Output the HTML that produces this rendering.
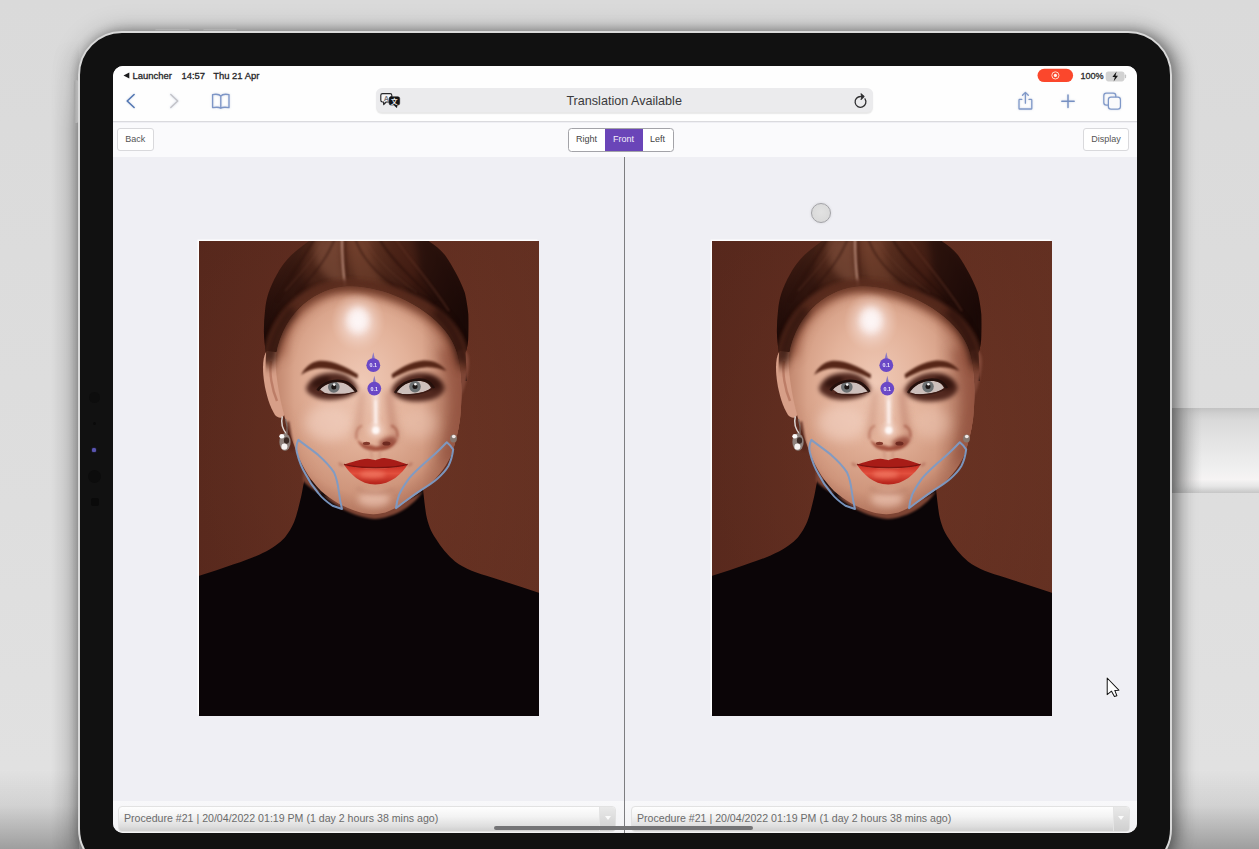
<!DOCTYPE html>
<html lang="en">
<head>
<meta charset="utf-8">
<title>Procedure comparison</title>
<style>
*{box-sizing:border-box;margin:0;padding:0}
html,body{width:1259px;height:849px;overflow:hidden}
body{position:relative;background:#dddddd;font-family:"Liberation Sans",sans-serif;color:#222}
.abs{position:absolute}
/* desk / backdrop */
#desk{left:0;top:0;width:1259px;height:849px;background:linear-gradient(180deg,#dadada 0,#dedede 60%,#e2e2e2 100%)}
#pencil{left:1172px;top:408px;width:87px;height:85px;background:linear-gradient(180deg,#c2c2c2 0,#cfcfcf 6%,#d9d9d9 14%,#e4e4e4 40%,#efefef 70%,#f6f4f4 84%,#e6e6e6 92%,#c6c6c6 100%)}
#pencilfade{left:1172px;top:408px;width:30px;height:85px;background:linear-gradient(90deg,rgba(178,178,178,.9),rgba(200,200,200,0))}
#rshadow{left:1172px;top:60px;width:40px;height:789px;background:linear-gradient(90deg,rgba(120,120,120,.38),rgba(150,150,150,.16) 45%,rgba(160,160,160,0))}
#lband{left:52px;top:40px;width:27px;height:809px;background:linear-gradient(90deg,rgba(0,0,0,0),rgba(0,0,0,.05) 45%,rgba(0,0,0,.15));-webkit-mask-image:linear-gradient(180deg,transparent 0,#000 90px);mask-image:linear-gradient(180deg,transparent 0,#000 90px)}
#botshade{left:0;top:770px;width:1259px;height:79px;background:linear-gradient(180deg,rgba(0,0,0,0),rgba(0,0,0,.07) 45%,rgba(0,0,0,.30))}
/* device */
#device{left:77.5px;top:30.5px;width:1094px;height:842px;border-radius:44px;background:#111111;border:2.6px solid #d9d9d9;box-shadow:7px 1px 15px 1px rgba(0,0,0,.30),0 0 24px 5px rgba(0,0,0,.13),0 0 8px 1px rgba(0,0,0,.16)}
.hwbtn{background:linear-gradient(180deg,#f2f2f2,#cfcfcf);border-radius:1.5px}
#screen{left:113px;top:66px;width:1023.5px;height:767px;border-radius:10px;background:#efeff4;overflow:hidden}
/* safari */
#safari{left:0;top:0;width:100%;height:56px;background:#fefefe;border-bottom:1px solid #dadade}
.st{font-size:9.45px;font-weight:normal;color:#262628;-webkit-text-stroke:.3px #262628;white-space:nowrap;line-height:12px}
#url{left:262.5px;top:22.3px;width:497.3px;height:24px;border-radius:6px;background:#ebebed;box-shadow:0 1.6px 1.2px rgba(0,0,0,.09)}
#urltxt{left:0;top:0;width:100%;height:24px;line-height:27px;text-align:center;font-size:12.6px;color:#3a3a3c}
/* app bar */
#appbar{left:0;top:57px;width:100%;height:34px;background:#fafafc}
.btn{background:#fff;border:1px solid #d9d9dc;border-radius:3px;font-size:9px;color:#555;text-align:center;line-height:21px;height:23px}
#seg{left:454.5px;top:62px;width:106px;height:23.5px;border:1px solid #a3a3a8;border-radius:3.5px;background:#fff;overflow:hidden;font-size:9px;color:#444;line-height:21px}
#seg span{position:absolute;top:0;height:22px;text-align:center}
/* content */
#vline{left:510.5px;top:91px;width:1.4px;height:676px;background:#7d7d80}
#touch{left:698px;top:137px;width:20px;height:20px;border-radius:50%;background:radial-gradient(circle at 50% 45%,#e2e2e2,#d6d6d6);border:1px solid #a2a2a6;box-shadow:0 0 3px rgba(0,0,0,.12)}
.photo{width:340px;height:475px;box-shadow:-1.5px -1.5px 0 0 rgba(255,255,255,.9)}
/* bottom */
#bottom{left:0;top:735px;width:100%;height:32px;background:linear-gradient(180deg,#f8f8fa,#f2f2f4)}
.sel{top:740px;height:26px;border-radius:4px;border:1px solid #e2e2e2;background:linear-gradient(180deg,#fefefe 0,#f3f3f3 40%,#dedede 80%,#cfcfcf 100%);font-size:10.6px;color:#6b6b6b;line-height:23px;padding-left:5px;white-space:nowrap;overflow:hidden}
.sel i{position:absolute;right:0;top:0;width:16px;height:100%;background:linear-gradient(180deg,#e9e9e9,#cfcfcf);border-left:1px solid #e4e4e4}
.sel i:after{content:"";position:absolute;left:4.5px;top:9px;border:3.2px solid transparent;border-top:4px solid #fbfbfb}
#home{left:381px;top:760px;width:259px;height:4.2px;border-radius:2.2px;background:#747476}
</style>
</head>
<body>
<div id="desk" class="abs"></div>
<div id="lband" class="abs"></div>
<div id="botshade" class="abs"></div>
<div id="pencil" class="abs"></div>
<div id="pencilfade" class="abs"></div>

<!-- hardware buttons -->
<div class="abs hwbtn" style="left:155px;top:28.6px;width:35px;height:3.6px"></div>
<div class="abs hwbtn" style="left:203px;top:28.6px;width:34px;height:3.6px"></div>
<div class="abs hwbtn" style="left:74.3px;top:80px;width:4px;height:43px;background:linear-gradient(90deg,#bdbdbd,#f0f0f0)"></div>

<div id="device" class="abs"></div>

<!-- bezel sensors -->
<div class="abs" style="left:88.5px;top:391.5px;width:11px;height:11px;border-radius:50%;background:#0d0d0d"></div>
<div class="abs" style="left:92.5px;top:422px;width:3px;height:3px;border-radius:50%;background:#0a0a0a"></div>
<div class="abs" style="left:91.7px;top:448.2px;width:4px;height:3.6px;border-radius:1.5px;background:#5a55b0;box-shadow:0 0 1.5px #4a47a0"></div>
<div class="abs" style="left:87.5px;top:469.5px;width:13px;height:13px;border-radius:50%;background:#0c0c0c"></div>
<div class="abs" style="left:90.5px;top:498px;width:8px;height:8px;border-radius:2px;background:#0a0a0a"></div>

<div id="screen" class="abs">
  <div id="safari" class="abs">
    <!-- status bar -->
    <svg class="abs" style="left:10.4px;top:6.2px" width="7" height="7" viewBox="0 0 7 7"><path d="M6.3 0.4 L6.3 6.4 L0.5 3.4 Z" fill="#1c1c1e"/></svg>
    <div class="abs st" style="left:19.6px;top:3.6px">Launcher</div>
    <div class="abs st" style="left:68.4px;top:3.6px">14:57</div>
    <div class="abs st" style="left:100.2px;top:3.6px">Thu 21 Apr</div>
    <svg class="abs" style="left:0;top:0;filter:drop-shadow(0 .8px 1.2px rgba(90,115,170,.28))" width="1023.5" height="56" viewBox="0 0 1023.5 56" fill="none" stroke-linecap="round" stroke-linejoin="round">
      <path d="M21.1 28.5 L14.2 35 L21.1 41.5" stroke="#5377b3" stroke-width="1.6"/>
      <path d="M57.8 28.5 L64.7 35 L57.8 41.5" stroke="#c3c3c8" stroke-width="1.5"/>
      <path d="M107.8 30.2 C106.6 28.4 103.6 27.9 99.6 28.6 L99.6 41.6 C103.6 41 106.6 41.3 107.8 42.2 C109 41.3 112 41 116 41.6 L116 28.6 C112 27.9 109 28.4 107.8 30.2 Z M107.8 30.2 L107.8 42" stroke="#7d95c6" stroke-width="1.35"/>
      <path d="M906 34.2 L906 42.4 Q906 43 906.7 43 L918.1 43 Q918.8 43 918.8 42.4 L918.8 34.2 Q918.8 33.4 918.1 33.4 L916 33.4 M906 34.2 Q906 33.4 906.7 33.4 L908.8 33.4 M912.4 26.6 L912.4 37.2 M909.5 29.3 L912.4 26.4 L915.3 29.3" stroke="#7f98c8" stroke-width="1.3"/>
      <path d="M948.8 35.2 L961.2 35.2 M955 29 L955 41.4" stroke="#7690c2" stroke-width="1.45"/>
      <rect x="990.8" y="27.2" width="12" height="12" rx="2.6" stroke="#7f98c8" stroke-width="1.25"/>
      <rect x="995.4" y="31.2" width="12" height="11.8" rx="2.6" fill="#fafafb" stroke="#7f98c8" stroke-width="1.25"/>
    </svg>
    <!-- record pill / battery -->
    <svg class="abs" style="left:920px;top:0" width="100" height="20" viewBox="920 0 100 20">
      <rect x="924.5" y="2.7" width="35.6" height="13.4" rx="6.7" fill="#fb472c"/>
      <circle cx="942.4" cy="9.4" r="3.6" fill="none" stroke="#ffd8c8" stroke-width="1"/>
      <circle cx="942.4" cy="9.4" r="1.6" fill="#fff3ee"/>
      <rect x="992.7" y="5.6" width="18.8" height="9.8" rx="2.8" fill="#d2d2d2"/>
      <rect x="1011.8" y="8.6" width="1.3" height="3.6" rx=".6" fill="#c4c4c4"/>
      <path d="M1003.6 5.4 L999.4 11 L1001.9 11 L1000.6 15.6 L1005 9.8 L1002.5 9.8 Z" fill="#141414"/>
    </svg>
    <div class="abs st" style="left:967.4px;top:3.6px;color:#333;font-size:9.1px">100%</div>
    <!-- URL -->
    <div id="url" class="abs">
      <svg class="abs" style="left:0;top:0" width="497.5" height="26" viewBox="262.5 22.3 497.5 26" fill="none" stroke-linecap="round" stroke-linejoin="round">
        <path d="M269 27.9 L276.6 27.9 Q278.3 27.9 278.3 29.6 L278.3 34.6 Q278.3 36.3 276.6 36.3 L272.6 36.3 L270.2 38.9 L270.2 36.3 L269 36.3 Q267.3 36.3 267.3 34.6 L267.3 29.6 Q267.3 27.9 269 27.9 Z" fill="#f6f6f7" stroke="#262628" stroke-width="1.15"/>
        <text x="272.8" y="35.1" font-family="Liberation Sans, sans-serif" font-size="7.2" font-weight="bold" fill="#77777c" stroke="none" text-anchor="middle">A</text>
        <path d="M277.4 31 L284.4 31 Q286.2 31 286.2 32.8 L286.2 37.6 Q286.2 39.4 284.4 39.4 L283.8 39.4 L283.2 42 L280.4 39.4 L277.4 39.4 Q275.6 39.4 275.6 37.6 L275.6 32.8 Q275.6 31 277.4 31 Z" fill="#141416" stroke="#141416" stroke-width=".5"/>
        <text x="280.9" y="37.9" font-family="Noto Sans CJK SC, Liberation Sans, sans-serif" font-size="6.6" font-weight="bold" fill="#f2f2f2" stroke="none" text-anchor="middle">文</text>
        <path d="M751.5 33.2 A5.4 5.4 0 1 1 747.3 30.8 L749.6 30.8" stroke="#2e2e30" stroke-width="1.3"/>
        <path d="M747.6 28.2 L750.4 30.8 L747.6 33.5" stroke="#2e2e30" stroke-width="1.3" fill="#2e2e30"/>
      </svg>
      <div id="urltxt" class="abs">Translation Available</div>
    </div>
  </div>

  <div id="appbar" class="abs"></div>
  <div class="abs btn" style="left:4px;top:62.4px;width:36.6px">Back</div>
  <div id="seg" class="abs">
    <span style="left:0;width:36px">Right</span>
    <span style="left:36px;width:38px;background:#6a45b8;color:#f3effb;height:23px">Front</span>
    <span style="left:74px;width:30px">Left</span>
  </div>
  <div class="abs btn" style="left:970px;top:62.2px;width:46px">Display</div>

    <div id="touch" class="abs"></div>

  <!-- PHOTOS -->
  <svg class="abs photo" style="left:85.5px;top:175px" width="340" height="475" viewBox="0 0 340 475">
    <defs>
      <linearGradient id="bgG" x1="0" y1="0" x2="1" y2="0">
        <stop offset="0" stop-color="#59291d"/><stop offset=".45" stop-color="#602d20"/><stop offset="1" stop-color="#6a3424"/>
      </linearGradient>
      <radialGradient id="bgV" cx=".5" cy=".45" r=".75">
        <stop offset="0" stop-color="#7a3d29" stop-opacity=".35"/><stop offset="1" stop-color="#4a2118" stop-opacity=".25"/>
      </radialGradient>
      <radialGradient id="hairG" gradientUnits="userSpaceOnUse" cx="152" cy="-6" r="135" gradientTransform="translate(152 -6) scale(1 1.05) translate(-152 6)">
        <stop offset="0" stop-color="#683827"/><stop offset=".28" stop-color="#522a1c"/><stop offset=".52" stop-color="#3c1b12"/><stop offset=".78" stop-color="#29100b"/><stop offset="1" stop-color="#1b0906"/>
      </radialGradient>
      <radialGradient id="skinG" cx=".47" cy=".42" r=".62">
        <stop offset="0" stop-color="#efc9b6"/><stop offset=".42" stop-color="#e3b29a"/><stop offset=".78" stop-color="#cf967c"/><stop offset="1" stop-color="#a96b54"/>
      </radialGradient>
      <linearGradient id="sideShade" x1="0" y1="0" x2="1" y2="0">
        <stop offset="0" stop-color="#a0604a" stop-opacity=".55"/><stop offset=".16" stop-color="#a0604a" stop-opacity="0"/><stop offset=".74" stop-color="#8c4f3c" stop-opacity="0"/><stop offset="1" stop-color="#7a4030" stop-opacity=".85"/>
      </linearGradient>
      <radialGradient id="foreHL" cx=".5" cy=".5" r=".5">
        <stop offset="0" stop-color="#fbf1f1" stop-opacity=".98"/><stop offset=".4" stop-color="#f7e2dc" stop-opacity=".75"/><stop offset="1" stop-color="#f0cdbd" stop-opacity="0"/>
      </radialGradient>
      <linearGradient id="lipLow" x1="0" y1="0" x2="0" y2="1">
        <stop offset="0" stop-color="#c62a20"/><stop offset=".45" stop-color="#e24f3d"/><stop offset="1" stop-color="#b32119"/>
      </linearGradient>
      <filter id="b1" color-interpolation-filters="sRGB" filterUnits="userSpaceOnUse" x="-40" y="-40" width="420" height="555"><feGaussianBlur stdDeviation="1"/></filter>
      <filter id="b2" color-interpolation-filters="sRGB" filterUnits="userSpaceOnUse" x="-40" y="-40" width="420" height="555"><feGaussianBlur stdDeviation="2"/></filter>
      <filter id="b3" color-interpolation-filters="sRGB" filterUnits="userSpaceOnUse" x="-40" y="-40" width="420" height="555"><feGaussianBlur stdDeviation="3.5"/></filter>
      <filter id="b6" color-interpolation-filters="sRGB" filterUnits="userSpaceOnUse" x="-40" y="-40" width="420" height="555"><feGaussianBlur stdDeviation="6"/></filter>
      <filter id="b08" color-interpolation-filters="sRGB" filterUnits="userSpaceOnUse" x="-40" y="-40" width="420" height="555"><feGaussianBlur stdDeviation=".85"/></filter>
      <filter id="b05" color-interpolation-filters="sRGB" filterUnits="userSpaceOnUse" x="-40" y="-40" width="420" height="555"><feGaussianBlur stdDeviation=".55"/></filter>
      <clipPath id="pclip"><rect x="0" y="0" width="340" height="475"/></clipPath>
      <clipPath id="faceClip"><path id="facePath" d="M77 114 C81 91 92 74 105 63 C118 52 133 46.500 148 45.500 C165 44.500 186 50 201 57 C219 65 236 77 246 90 C254 100 258 110 260 122 C263 140 263 160 261 178 C259 192 256 204 252 214 C246 228 236 240 222 250 C210 259 200 266 190 270 C181 274 170 274 160 271 C146 267 132 259 122 250 C110 238 101 222 95 204 C88 186 82 165 79 145 C77 132 76 122 77 112 Z"/></clipPath>
      <clipPath id="hairClip"><path d="M114 -3 C106 3 98 9 92.500 14 C86 20 81.500 27 78.200 33 C74.500 39.500 71.500 46 69.500 52 C67.500 58 66.500 64 66 70 C65.200 77 64.800 84 64.900 91 C65 98 66 105 67 112 L66 140 L268 140 L266.500 112 C268.500 106 269.300 100 269.300 94.400 C269.500 87 269.500 80 269.300 73.200 C268.500 66 267.500 59 265.900 52 C263.500 45 260.500 39 257.400 33 C254 26.500 250 20 245.900 14 C241 8.500 236 4 230.500 0.700 L227 -3 Z"/></clipPath>
    </defs>

    <g id="portrait" clip-path="url(#pclip)">
      <rect width="340" height="475" fill="url(#bgG)"/>
      <rect width="340" height="475" fill="url(#bgV)"/>

      <!-- hair -->
      <g filter="url(#b05)">
        <path d="M114 -3 C106 3 98 9 92.500 14 C86 20 81.500 27 78.200 33 C74.500 39.500 71.500 46 69.500 52 C67.500 58 66.500 64 66 70 C65.200 77 64.800 84 64.900 91 C65 98 66 105 67 112 L66 140 L268 140 L266.500 112 C268.500 106 269.300 100 269.300 94.400 C269.500 87 269.500 80 269.300 73.200 C268.500 66 267.500 59 265.900 52 C263.500 45 260.500 39 257.400 33 C254 26.500 250 20 245.900 14 C241 8.500 236 4 230.500 0.700 L227 -3 Z" fill="url(#hairG)"/>
      </g>
      <g clip-path="url(#hairClip)">
        <g filter="url(#b3)">
          <path d="M105 -3 C90 16 76 40 70 70 C66 90 66 104 68 118 L82 118 C82 92 92 66 112 48 C100 36 100 14 112 -3 Z" fill="#1e0b08" opacity=".28"/>
          <path d="M232 -3 C250 16 264 44 268 74 C270 92 269 106 267 120 L248 96 C240 78 226 64 204 54 C222 40 224 14 214 -3 Z" fill="#190806" opacity=".45"/>
          <path d="M118 -3 C112 14 118 34 140 44 L150 44 C142 30 140 12 142 -3 Z" fill="#93604a" opacity=".42"/>
          <path d="M150 -3 C150 14 152 30 158 44 L190 48 C176 34 170 14 172 -3 Z" fill="#8a523b" opacity=".38"/>
          <path d="M186 -3 C190 14 200 34 216 50 L232 58 C224 38 214 16 208 -3 Z" fill="#4a2015" opacity=".45"/>
        </g>
        <!-- strands -->
        <g fill="none" filter="url(#b1)" opacity=".55">
          <path d="M136 -3 C130 14 118 30 98 52" stroke="#2a100b" stroke-width="1.600"/>
          <path d="M126 -3 C118 14 104 30 86 50" stroke="#7a4a38" stroke-width="1.400" opacity=".5"/>
          <path d="M116 -3 C106 14 92 34 78 60" stroke="#2a100b" stroke-width="1.800"/>
          <path d="M156 -3 C162 16 176 32 200 48" stroke="#2a100b" stroke-width="1.600"/>
          <path d="M166 -3 C174 16 192 32 218 52" stroke="#7a4a38" stroke-width="1.400" opacity=".5"/>
          <path d="M180 -3 C190 16 210 34 236 60" stroke="#220c08" stroke-width="2"/>
          <path d="M196 -3 C208 16 228 36 250 70" stroke="#6a3a2a" stroke-width="1.400"/>
        </g>
        <!-- parting -->
        <path d="M143 -3 C143 14 144 30 146 44" stroke="#c29584" stroke-width="1.800" fill="none" filter="url(#b1)" opacity=".95"/>
        <path d="M146.5 -3 C146.5 14 147.5 30 149.5 44" stroke="#3a160e" stroke-width="1.6" fill="none" filter="url(#b1)" opacity=".55"/>
      </g>

      <!-- body -->
      <path d="M-2 335.5 C12 331 24 327 34 323.5 C48 319 58 315 67 310.5 C77 305 83 300 87 295 C93 287 96 280 98 272 C101 262 103 252 104 246 L106 236 C130 250 200 256 222 244 L224 248 C225 258 226 266 227 273 C229 283 232 291 237 298 C242 306 248 314 256 320.5 C266 328 278 332 293 336.5 C310 342 326 347 342 352.5 L342 477 L-2 477 Z" fill="#0b0507" filter="url(#b05)"/>
      

      <!-- left ear -->
      <g filter="url(#b05)">
        <path d="M68 110 C64 114 63 126 65 140 C67 154 71 166 76 174 C80 178 84 178 86 172 L84 112 Z" fill="#d79f88"/>
        <path d="M72 120 C70 132 73 148 78 160" stroke="#b06f5a" stroke-width="2.4" fill="none" opacity=".7"/>
      </g>
      <!-- right ear (shadow side) -->
      <path d="M259 110 C266 106 271 112 270 124 C269 136 265 150 260 160 Z" fill="#7f4636" filter="url(#b1)"/>

      <!-- neck shadow under jaw -->
      <path d="M104 228 C120 258 150 276 176 278 C200 276 218 262 228 244 L224 250 C200 270 130 268 104 240 Z" fill="#7d4433" filter="url(#b1)"/>

      <!-- face -->
      <g filter="url(#b05)"><use href="#facePath" fill="url(#skinG)"/></g>
      <g clip-path="url(#faceClip)">
        <rect x="60" y="30" width="220" height="260" fill="url(#sideShade)"/>
        <!-- hairline soft shadow -->
        <path d="M77 116 C80 90 92 72 106 61 C120 50 134 45 148 44 C166 43 186 49 202 56 C222 65 240 78 250 92 C257 102 259 112 260 124" stroke="#94553f" stroke-width="15" fill="none" filter="url(#b6)" opacity=".9"/>
        <!-- cheek/jaw shading -->
        <path d="M84 170 C90 205 104 236 128 256 C146 270 168 276 188 272 C208 264 232 246 248 222 C256 208 260 190 262 176 L272 176 L272 290 L70 290 Z" fill="#b77760" filter="url(#b6)" opacity=".55"/>
        <path d="M238 110 C252 140 254 180 240 220 L275 225 L275 100 Z" fill="#93523f" filter="url(#b6)" opacity=".7"/>
        <!-- forehead highlight -->
        <ellipse cx="159" cy="81" rx="27" ry="30" fill="url(#foreHL)"/>
        <ellipse cx="159" cy="79" rx="10" ry="12" fill="#fdf6f6" filter="url(#b3)" opacity=".9"/>
        <!-- cheek highlights -->
        <ellipse cx="130" cy="182" rx="24" ry="18" fill="#f4d6c8" filter="url(#b6)" opacity=".55"/>
        <ellipse cx="220" cy="182" rx="18" ry="16" fill="#efcbb9" filter="url(#b6)" opacity=".45"/>
        <ellipse cx="175" cy="258" rx="16" ry="8" fill="#ecc4b2" filter="url(#b3)" opacity=".7"/>

        <!-- eye shadow / smoky -->
        <g filter="url(#b2)">
          <path d="M107 147 C110 136 124 130 140 132 C150 134 156 140 159 149 C152 158 132 161 118 157 C111 154 107 151 107 147 Z" fill="#4b2219" opacity=".95"/>
          <path d="M192 150 C195 140 206 133 220 131.500 C234 131 244 137 246 147 C244 156 232 161 216 160.500 C203 160 195 156 192 150 Z" fill="#4b2219" opacity=".95"/>
          <ellipse cx="122" cy="141" rx="10" ry="5" fill="#2e120d" opacity=".8" transform="rotate(-18 122 141)"/>
          <ellipse cx="232" cy="142" rx="10" ry="6" fill="#2e120d" opacity=".8" transform="rotate(22 232 142)"/>
        </g>
        <!-- eyes -->
        <g filter="url(#b05)">
          <path d="M121 148.500 C126 142.500 137 139.500 146 142.500 C150 144.500 153.500 147.500 156 151 C148 153 133 153.500 126 152 Z" fill="#cdbfbb"/>
          <circle cx="134.800" cy="146" r="5.800" fill="#6c7072"/>
          <circle cx="134.800" cy="146" r="2.500" fill="#1b1514"/>
          <circle cx="135.200" cy="143.600" r="1.300" fill="#f6f4f4"/>
          <path d="M118.500 149.500 C124 141 138 137.500 147.500 141.500 C151.500 143.500 155 147 157.500 151" stroke="#24100c" stroke-width="2.600" fill="none"/>
          <path d="M123 152 C132 155 146 154.500 156 151" stroke="#3a1a14" stroke-width="1.300" fill="none"/>

          <path d="M197.500 151 C201 145 209 140.500 219 140 C226 140 230 142.500 232 147 C227 151.500 212 154 203 153 Z" fill="#cdbfbb"/>
          <circle cx="216" cy="145.600" r="5.800" fill="#6c7072"/>
          <circle cx="216" cy="145.600" r="2.500" fill="#1b1514"/>
          <circle cx="216.400" cy="143.200" r="1.300" fill="#f6f4f4"/>
          <path d="M196 152 C200.500 144 209.500 139 220 138.500 C227 138.500 232 141.500 235 147" stroke="#24100c" stroke-width="2.600" fill="none"/>
          <path d="M198.500 152.500 C207 155 223 154 232.500 148" stroke="#3a1a14" stroke-width="1.300" fill="none"/>
        </g>
        <!-- brows -->
        <g filter="url(#b08)">
          <path d="M102 134 C105.500 127 111 121.500 119 120 C131 118.500 146 125 159 133.500 L158.500 137.500 C147 131.500 133 127 121 127.200 C113 127.600 107 130.500 102 134 Z" fill="#562617"/>
          <path d="M192.500 133.500 C201 127 212 121 224 119.600 C234 118.800 242 122.500 247.500 130 C241 127.500 234 126 226 126.400 C214 127.400 203 132 193.500 137.500 Z" fill="#562617"/>
        </g>

        <!-- nose -->
        <path d="M163 150 C162 170 160 184 157 196" stroke="#c38872" stroke-width="5" fill="none" filter="url(#b3)" opacity=".6"/>
        <path d="M190 150 C191 170 193 184 197 196" stroke="#b97a66" stroke-width="6" fill="none" filter="url(#b3)" opacity=".7"/>
        <path d="M176.600 150 L176.800 184" stroke="#f9e9e3" stroke-width="4.600" stroke-linecap="round" fill="none" filter="url(#b2)" opacity=".95"/>
        <path d="M176.700 160 L176.800 182" stroke="#fff6f3" stroke-width="2" stroke-linecap="round" fill="none" filter="url(#b1)" opacity=".9"/>
        <ellipse cx="176.800" cy="189.200" rx="3.600" ry="3.800" fill="#ffffff" filter="url(#b1)"/>
        <ellipse cx="176.800" cy="189.200" rx="6" ry="6" fill="#fff2ee" filter="url(#b3)" opacity=".7"/>
        <path d="M158 198 C162 204 170 203 177 205.500 C184 203.500 193 205 198 197 C195 208 185 210 177 210 C169 210 161 208 158 198 Z" fill="#a4523f" filter="url(#b1)" opacity=".95"/>
        <path d="M180 201 C186 196 194 194 198 197 C197 204 190 207 182 206 Z" fill="#8a3a2c" filter="url(#b2)" opacity=".8"/>
        <path d="M157.500 198 C156 191 159 186 163 184.500" stroke="#bd7b66" stroke-width="2.400" fill="none" filter="url(#b1)" opacity=".8"/>
        <path d="M198 196.500 C199.500 190 196 185.500 192 184.500" stroke="#b06a56" stroke-width="2.600" fill="none" filter="url(#b1)" opacity=".85"/>
        <ellipse cx="167.500" cy="202.400" rx="3.600" ry="1.700" fill="#83392b" filter="url(#b05)"/>
        <ellipse cx="187.500" cy="202.400" rx="4" ry="2" fill="#6e2a20" filter="url(#b05)"/>
        <path d="M172 210 C173 214 173 216 172.500 218" stroke="#c98f79" stroke-width="2" fill="none" filter="url(#b1)" opacity=".6"/>
        <path d="M181 210 C180.500 214 180.500 216 181 218" stroke="#c98f79" stroke-width="2" fill="none" filter="url(#b1)" opacity=".6"/>

        <!-- lips -->
        <g filter="url(#b05)">
          <path d="M144.900 223.400 C152 221.500 161 218 168.400 217.700 C172 217.800 174.500 218.800 176.300 219.200 C178.500 218.600 181.500 217.300 185.200 217.100 C193 217.600 201 221.200 208.700 223.400 C200 226.600 188 227.200 176.500 227.200 C165 227.200 153 226.400 144.900 223.400 Z" fill="#a81c17"/>
          <path d="M144.900 223.400 C153 226.400 165 227.200 176.500 227.200 C188 227.200 200 226.600 208.700 223.400 C203 232.500 192 243.300 176.300 243.600 C161 243.300 151 232.500 144.900 223.400 Z" fill="url(#lipLow)"/>
          <path d="M144.900 223.400 C155 226 166 226.600 176.500 226.600 C188 226.600 199 226 208.700 223.400" stroke="#7a120f" stroke-width="1.400" fill="none"/>
        </g>
        <ellipse cx="173.500" cy="233.500" rx="13" ry="3.600" fill="#f07560" filter="url(#b2)" opacity=".85"/>
        <path d="M158 248 C167 253 187 253 196 248" stroke="#bd846e" stroke-width="3.500" fill="none" filter="url(#b2)" opacity=".75"/>
        <path d="M140 222 C142 224 143 225 144.500 223.500" stroke="#b4705c" stroke-width="2.500" fill="none" filter="url(#b1)" opacity=".7"/>
        <path d="M213 222 C211 224 210 225 208.900 223.500" stroke="#b4705c" stroke-width="2.500" fill="none" filter="url(#b1)" opacity=".7"/>
      </g>

      <!-- soft hairline (hair fading into skin) -->
      <g clip-path="url(#hairClip)">
        <path d="M70 128 C74 100 84 80 99 66 C113 53 130 47 146 46 C164 45 184 50 202 57 C224 66 242 79 252 93 C260 104 263 116 264 130" stroke="#6a3827" stroke-width="9" fill="none" filter="url(#b3)" opacity=".85"/>
        <path d="M66 122 C70 96 80 76 96 62 C110 50 128 43 146 42 C166 41 186 46 204 53 C228 62 246 76 256 90 C264 102 267 114 268 128" stroke="#5a2c1e" stroke-width="6" fill="none" filter="url(#b2)" opacity=".9"/>
        <path d="M236 70 C250 82 260 98 264 122" stroke="#2a100b" stroke-width="9" fill="none" filter="url(#b3)" opacity=".8"/>
        <path d="M71 120 C73 100 80 84 94 68" stroke="#2e130d" stroke-width="9" fill="none" filter="url(#b3)" opacity=".8"/>
      </g>
      <!-- earrings -->
      <path d="M90 180 C92 190 93 200 95.500 209 L91 210 C89 200 88 190 88 181 Z" fill="#57271c" filter="url(#b1)" opacity=".9"/>
      <g filter="url(#b05)">
        <path d="M83.300 175.500 C82 181 83.500 188 87.500 193" stroke="#d9d2cf" stroke-width="1.500" fill="none"/>
        <path d="M86.500 178 C88 183 88.500 188 88 193" stroke="#7d6b64" stroke-width="1.300" fill="none"/>
        <ellipse cx="86" cy="201" rx="5.600" ry="8.800" fill="#8f827d"/>
        <ellipse cx="87.500" cy="199.500" rx="2.600" ry="3.200" fill="#3b2a25"/>
        <ellipse cx="82.800" cy="195.300" rx="2.500" ry="2.300" fill="#fbf9f9"/>
        <ellipse cx="85.400" cy="205.600" rx="3" ry="3.200" fill="#f7f3f2"/>
        <ellipse cx="254.500" cy="197.500" rx="3.400" ry="4" fill="#86776f"/>
        <ellipse cx="254.800" cy="195.500" rx="1.900" ry="1.700" fill="#efeae8"/>
      </g>
    </g>
    <g id="annot">
      <g fill="none" stroke="#7d9bc6" stroke-width="2" stroke-linejoin="round" stroke-linecap="round" opacity=".95">
        <path d="M99.3 198.9 C106 204 113 209 119.2 213.9 C125 219 131 225 135 231.4 C138 238 139 244 139.8 250.5 C140.5 256 141.5 262 143 268 C140 267 137 266 133.5 264.8 C128 261 123 257 119.2 252 C114 246 110 240 106.500 233 C102 226 99.5 218 97.7 210.8 C97 206 97.5 202 99.3 198.9 Z"/>
        <path d="M197 267.2 C197.500 262 198.5 258 200.2 253.7 C202.5 248 206 243 209.700 237.8 C214 232.500 219 228 224 223.500 C229 219 234 215 238.3 210.8 C242 207.500 245 204 247.8 201.2 C250 203 252.500 205.500 254.2 208.400 C253.5 214 252 220 249.400 225 C246.5 230 242.500 234 238.3 237.8 C233.5 242 228 245.500 222.400 248.900 C217 252.500 212 256 206.500 260 C203 262.500 200 265 197 267.2 Z"/>
      </g>
      <g>
        <path d="M172.400 119 L174.300 111.300 L176.200 119 Z" fill="#8a78c4"/>
        <circle cx="174.300" cy="124.200" r="6.900" fill="#6a48c6"/>
        <path d="M173.400 142.400 L175.300 134.800 L177.200 142.400 Z" fill="#8a78c4"/>
        <circle cx="175.300" cy="147.600" r="6.900" fill="#6a48c6"/>
        <text x="174.3" y="126.200" font-family="Liberation Sans, sans-serif" font-size="5.4" font-weight="bold" fill="#ece6fb" text-anchor="middle">0.1</text>
        <text x="175.3" y="149.600" font-family="Liberation Sans, sans-serif" font-size="5.4" font-weight="bold" fill="#ece6fb" text-anchor="middle">0.1</text>
      </g>
    </g>
  </svg>

  <svg class="abs photo" style="left:598.5px;top:175px" width="340" height="475" viewBox="0 0 340 475">
    <use href="#portrait"/>
    <g>
      <g fill="none" stroke="#7d9bc6" stroke-width="2" stroke-linejoin="round" stroke-linecap="round" opacity=".95">
        <path d="M99.3 198.9 C106 204 113 209 119.2 213.9 C125 219 131 225 135 231.4 C138 238 139 244 139.8 250.5 C140.5 256 141.5 262 143 268 C140 267 137 266 133.5 264.8 C128 261 123 257 119.2 252 C114 246 110 240 106.500 233 C102 226 99.5 218 97.7 210.8 C97 206 97.5 202 99.3 198.9 Z"/>
        <path d="M197 267.2 C197.500 262 198.5 258 200.2 253.7 C202.5 248 206 243 209.700 237.8 C214 232.500 219 228 224 223.500 C229 219 234 215 238.3 210.8 C242 207.500 245 204 247.8 201.2 C250 203 252.500 205.500 254.2 208.400 C253.5 214 252 220 249.400 225 C246.5 230 242.500 234 238.3 237.8 C233.5 242 228 245.500 222.400 248.900 C217 252.500 212 256 206.500 260 C203 262.500 200 265 197 267.2 Z"/>
      </g>
      <g>
        <path d="M172.400 119 L174.300 111.300 L176.200 119 Z" fill="#8a78c4"/>
        <circle cx="174.300" cy="124.200" r="6.900" fill="#6a48c6"/>
        <path d="M173.400 142.400 L175.300 134.800 L177.200 142.400 Z" fill="#8a78c4"/>
        <circle cx="175.300" cy="147.600" r="6.900" fill="#6a48c6"/>
        <text x="174.3" y="126.200" font-family="Liberation Sans, sans-serif" font-size="5.4" font-weight="bold" fill="#ece6fb" text-anchor="middle">0.1</text>
        <text x="175.3" y="149.600" font-family="Liberation Sans, sans-serif" font-size="5.4" font-weight="bold" fill="#ece6fb" text-anchor="middle">0.1</text>
      </g>
    </g>
  </svg>

  <div id="bottom" class="abs"></div>
  <div class="abs sel" style="left:5px;width:498px">Procedure #21 | 20/04/2022 01:19 PM (1 day 2 hours 38 mins ago)<i></i></div>
  <div class="abs sel" style="left:518px;width:498.5px">Procedure #21 | 20/04/2022 01:19 PM (1 day 2 hours 38 mins ago)<i></i></div>
  <div id="vline" class="abs"></div>
  <div id="home" class="abs"></div>

  <svg class="abs" style="left:988px;top:606px" width="26" height="32" viewBox="988 606 26 32">
    <path d="M994.2 612 L994.2 628.7 L998.5 625.2 L1001.4 630.6 L1003.9 629.8 L1001.8 624.4 L1005.9 624.2 Z" fill="#ffffff" stroke="#ffffff" stroke-width="2.6" stroke-linejoin="round" opacity=".9"/>
    <path d="M994.2 612 L994.2 628.7 L998.5 625.2 L1001.4 630.6 L1003.9 629.8 L1001.8 624.4 L1005.9 624.2 Z" fill="#fdfdfd" stroke="#161618" stroke-width="1.05" stroke-linejoin="round"/>
  </svg>
</div>
</body>
</html>
